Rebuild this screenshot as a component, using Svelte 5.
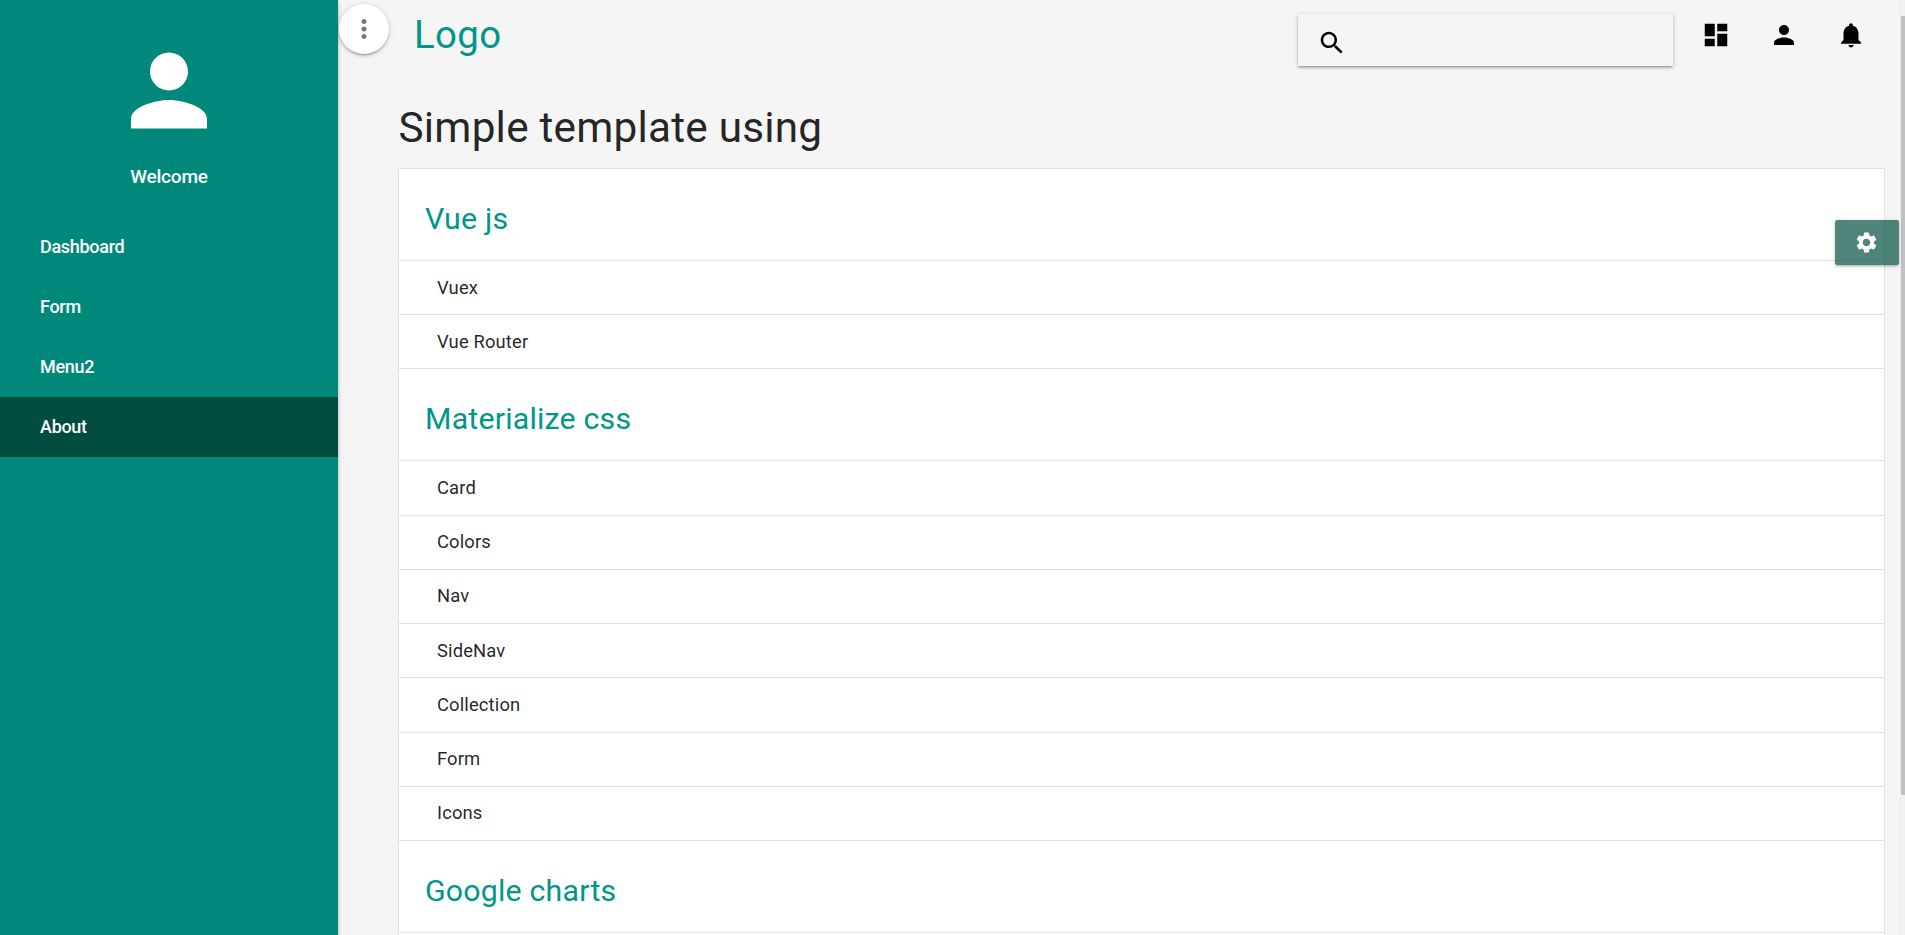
<script>
  const menu = ['Dashboard', 'Form', 'Menu2', 'About'];
  const active = 'About';
  const groups = [
    { title: 'Vue js', items: ['Vuex', 'Vue Router'] },
    { title: 'Materialize css', items: ['Card', 'Colors', 'Nav', 'SideNav', 'Collection', 'Form', 'Icons'] },
    { title: 'Google charts', items: [] }
  ];
  const person = 'M12 12c2.21 0 4-1.79 4-4s-1.79-4-4-4-4 1.79-4 4 1.79 4 4 4zm0 2c-2.67 0-8 1.34-8 4v2h16v-2c0-2.66-5.33-4-8-4z';
  const actions = [
    'M3 13h8V3H3v10zm0 8h8v-6H3v6zm10 0h8V11h-8v10zm0-18v6h8V3h-8z',
    person,
    'M12 22c1.1 0 2-.9 2-2h-4c0 1.1.89 2 2 2zm6-6v-5c0-3.07-1.64-5.64-4.5-6.32V4c0-.83-.67-1.5-1.5-1.5s-1.5.67-1.5 1.5v.68C7.63 5.36 6 7.92 6 11v5l-2 2v1h16v-1l-2-2z'
  ];
</script>

<div class="layout">
  <aside>
    <div class="profile">
      <svg viewBox="0 0 24 24"><path d={person} /></svg>
      <span>Welcome</span>
    </div>
    <nav>
      {#each menu as entry}
        <div class="entry" class:active={entry === active}>{entry}</div>
      {/each}
    </nav>
  </aside>

  <main>
    <header>
      <button class="toggle" aria-label="Menu">
        <svg viewBox="0 0 24 24"><path d="M12 8c1.1 0 2-.9 2-2s-.9-2-2-2-2 .9-2 2 .9 2 2 2zm0 2c-1.1 0-2 .9-2 2s.9 2 2 2 2-.9 2-2-.9-2-2-2zm0 6c-1.1 0-2 .9-2 2s.9 2 2 2 2-.9 2-2-.9-2-2-2z" /></svg>
      </button>
      <span class="logo">Logo</span>
      <div class="search">
        <svg viewBox="0 0 24 24"><path d="M15.5 14h-.79l-.28-.27C15.41 12.59 16 11.11 16 9.5 16 5.91 13.09 3 9.5 3S3 5.91 3 9.5 5.91 16 9.5 16c1.61 0 3.09-.59 4.23-1.57l.27.28v.79l5 4.99L20.49 19l-4.99-5zm-6 0C7.01 14 5 11.99 5 9.5S7.01 5 9.5 5 14 7.01 14 9.5 11.99 14 9.5 14z" /></svg>
      </div>
      <div class="actions">
        {#each actions as d}
          <svg viewBox="0 0 24 24"><path {d} /></svg>
        {/each}
      </div>
    </header>

    <h1>Simple template using</h1>
    <section class="collection">
      {#each groups as group}
        <div class="group"><h2>{group.title}</h2></div>
        {#each group.items as item}
          <div class="item">{item}</div>
        {/each}
      {/each}
    </section>
  </main>

  <div class="scrollbar"><div class="thumb"></div></div>
  <button class="settings" aria-label="Settings">
    <svg viewBox="0 0 24 24"><path d="M19.14 12.94c.04-.3.06-.61.06-.94 0-.32-.02-.64-.07-.94l2.03-1.58c.18-.14.23-.41.12-.61l-1.92-3.32c-.12-.22-.37-.29-.59-.22l-2.39.96c-.5-.38-1.03-.7-1.62-.94l-.36-2.54c-.04-.24-.24-.41-.48-.41h-3.84c-.24 0-.43.17-.47.41l-.36 2.54c-.59.24-1.13.57-1.62.94l-2.39-.96c-.22-.08-.47 0-.59.22L2.74 8.87c-.12.21-.08.47.12.61l2.03 1.58c-.05.3-.09.63-.09.94s.02.64.07.94l-2.03 1.58c-.18.14-.23.41-.12.61l1.92 3.32c.12.22.37.29.59.22l2.39-.96c.5.38 1.03.7 1.62.94l.36 2.54c.05.24.24.41.48.41h3.84c.24 0 .44-.17.47-.41l.36-2.54c.59-.24 1.13-.56 1.62-.94l2.39.96c.22.08.47 0 .59-.22l1.92-3.32c.12-.22.07-.47-.12-.61l-2.01-1.58zM12 15.6c-1.98 0-3.6-1.62-3.6-3.6s1.62-3.6 3.6-3.6 3.6 1.62 3.6 3.6-1.62 3.6-3.6 3.6z" /></svg>
  </button>
</div>

<style>
  :global(body) {
    overflow: hidden;
    background: #f5f5f5;
  }
  .layout {
    position: relative;
    display: flex;
    height: 935px;
    overflow: hidden;
    background: #f5f5f5;
    color: rgba(0, 0, 0, 0.87);
    font-family: Roboto, sans-serif;
    font-size: 18px;
    line-height: 27px;
  }
  svg {
    display: block;
    flex: none;
    width: 30px;
    height: 30px;
    fill: currentColor;
  }
  button {
    display: flex;
    align-items: center;
    justify-content: center;
    border: 0;
    padding: 0;
  }
  aside {
    flex: none;
    width: 338px;
    background: #00897b;
    color: #fff;
    box-shadow: 0 2px 2px 0 rgba(0, 0, 0, 0.14), 0 3px 1px -2px rgba(0, 0, 0, 0.12), 0 1px 5px 0 rgba(0, 0, 0, 0.2);
    font-weight: 500;
    letter-spacing: -0.3px;
  }
  .profile {
    display: flex;
    flex-direction: column;
    align-items: center;
    height: 184px;
    padding-top: 33px;
  }
  .profile svg {
    width: 114px;
    height: 115px;
  }
  .profile span {
    margin-top: 15px;
    font-size: 19px;
    letter-spacing: -0.2px;
  }
  .entry {
    height: 60px;
    padding-left: 40px;
    line-height: 60px;
  }
  .active {
    background: #004d40;
  }
  main {
    flex: 1;
    min-width: 0;
  }
  header {
    display: flex;
    align-items: flex-start;
    height: 85px;
    padding-left: 1px;
  }
  .toggle {
    width: 50px;
    height: 50px;
    margin-top: 4px;
    border-radius: 50%;
    background: #fff;
    color: #757575;
    box-shadow: 0 2px 2px 0 rgba(0, 0, 0, 0.14), 0 3px 1px -2px rgba(0, 0, 0, 0.12), 0 1px 5px 0 rgba(0, 0, 0, 0.2);
  }
  .logo {
    margin-left: 25px;
    color: #009688;
    font-size: 38.4px;
    letter-spacing: 0.4px;
    line-height: 69px;
  }
  .search {
    box-sizing: border-box;
    width: 375px;
    height: 52px;
    margin: 14px 28px 0 auto;
    padding: 14px 19px;
    color: #000;
    box-shadow: 0 2px 2px 0 rgba(0, 0, 0, 0.14), 0 3px 1px -2px rgba(0, 0, 0, 0.12), 0 1px 5px 0 rgba(0, 0, 0, 0.2);
    background: #f5f5f5;
  }
  .actions {
    display: flex;
    gap: 37.5px;
    margin-right: 33px;
    padding-top: 20px;
    color: #000;
  }
  h1 {
    height: 83px;
    margin: 0 0 0 60.5px;
    font-size: 42.3px;
    font-weight: 400;
    letter-spacing: 0.22px;
    line-height: 86px;
  }
  .collection {
    margin: 0 14px 0 60px;
    padding-bottom: 12px;
    border: 1px solid #e0e0e0;
    border-radius: 2px;
    background: #fff;
  }
  .group {
    box-sizing: border-box;
    height: 91.9px;
    padding: 33px 26px 0;
    border-bottom: 1px solid #e0e0e0;
  }
  h2 {
    margin: 0;
    color: #009688;
    font-size: 30.3px;
    font-weight: 400;
    letter-spacing: 0.2px;
    line-height: 34px;
  }
  .item {
    box-sizing: border-box;
    height: 54.25px;
    padding: 12.7px 38px;
    border-bottom: 1px solid #e0e0e0;
    font-size: 18.4px;
    letter-spacing: 0.14px;
  }
  .scrollbar {
    flex: none;
    width: 6px;
    background: #f1f1f1;
  }
  .thumb {
    height: 779px;
    margin: 16px 0 0 2px;
    background: #c1c1c1;
  }
  .settings {
    position: absolute;
    top: 220px;
    right: 6px;
    box-sizing: border-box;
    width: 64px;
    height: 45px;
    padding-right: 1px;
    border-radius: 2px;
    background: rgba(0, 77, 64, 0.69);
    color: #fff;
    box-shadow: 0 2px 2px 0 rgba(0, 0, 0, 0.1), 0 3px 1px -2px rgba(0, 0, 0, 0.08), 0 1px 5px 0 rgba(0, 0, 0, 0.14);
  }
  .settings svg {
    width: 25px;
    height: 25px;
  }
</style>
